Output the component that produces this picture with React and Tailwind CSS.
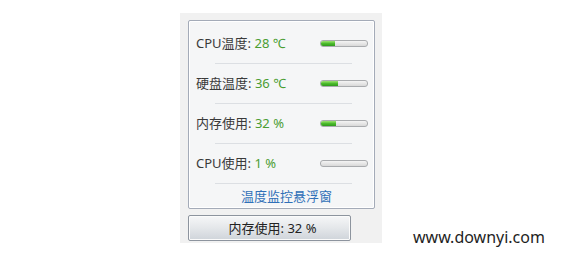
import React from "react";

const rows = [
  { label: "CPU温度:", value: "28 ℃", fill: 14 },
  { label: "硬盘温度:", value: "36 ℃", fill: 17 },
  { label: "内存使用:", value: "32 %", fill: 15 },
  { label: "CPU使用:", value: "1 %", fill: 0 },
];

function Bar({ fill }) {
  return (
    <div className="relative w-[48px] h-[7px] rounded-[3px] border border-[#a9abae] bg-gradient-to-b from-[#f4f4f4] to-[#d8d8d8] overflow-hidden">
      {fill > 0 && (
        <div
          className="h-full bg-gradient-to-b from-[#9be36f] via-[#4cbb2c] to-[#2f9a1d]"
          style={{ width: fill }}
        />
      )}
    </div>
  );
}

export default function App() {
  return (
    <div
      className="w-[580px] h-[262px] bg-white flex"
      style={{ fontFamily: '"Noto Sans", "Noto Sans CJK SC", sans-serif' }}
    >
      <div className="ml-[180px] mt-[13px] w-[202px] h-[230px] bg-[#f1f1f1] flex flex-col pl-[8px] pt-[7px]">
        <div className="w-[187px] h-[189px] border border-[#a4abb8] rounded-[2px] bg-[#f5f6f7] shadow-[inset_0_0_0_1px_#ffffff] flex flex-col pt-[3px]">
          {rows.map((r, i) => (
            <div key={i} className="flex flex-col">
              <div className="h-[39px] flex items-center justify-between pl-[7px] pr-[6px]">
                <span className="text-[13px] leading-none text-[#3a3a3a]">
                  {r.label}
                  <span className="text-[#4a9d32]"> {r.value}</span>
                </span>
                <Bar fill={r.fill} />
              </div>
              <div className="ml-[26px] w-[137px] h-px bg-[#dcdfe3]" />
            </div>
          ))}
          <div className="h-[29px] flex items-center justify-center pl-[10px] pt-[1px]">
            <span className="text-[13px] leading-none text-[#3070b8]">温度监控悬浮窗</span>
          </div>
        </div>
        <div className="mt-[6px] w-[163px] h-[26px] border border-[#8d949e] rounded-[2px] bg-gradient-to-b from-[#f6f7f8] via-[#e4e7ea] to-[#cfd4da] shadow-[inset_0_0_0_1px_#fbfbfb] flex items-center justify-center pl-[6px]">
          <span className="text-[13px] leading-none text-[#222]">内存使用: 32 %</span>
        </div>
      </div>
      <div className="ml-[31px] mt-[229px] text-[16px] leading-none text-[#1e1e1e] h-fit">
        www.downyi.com
      </div>
    </div>
  );
}
